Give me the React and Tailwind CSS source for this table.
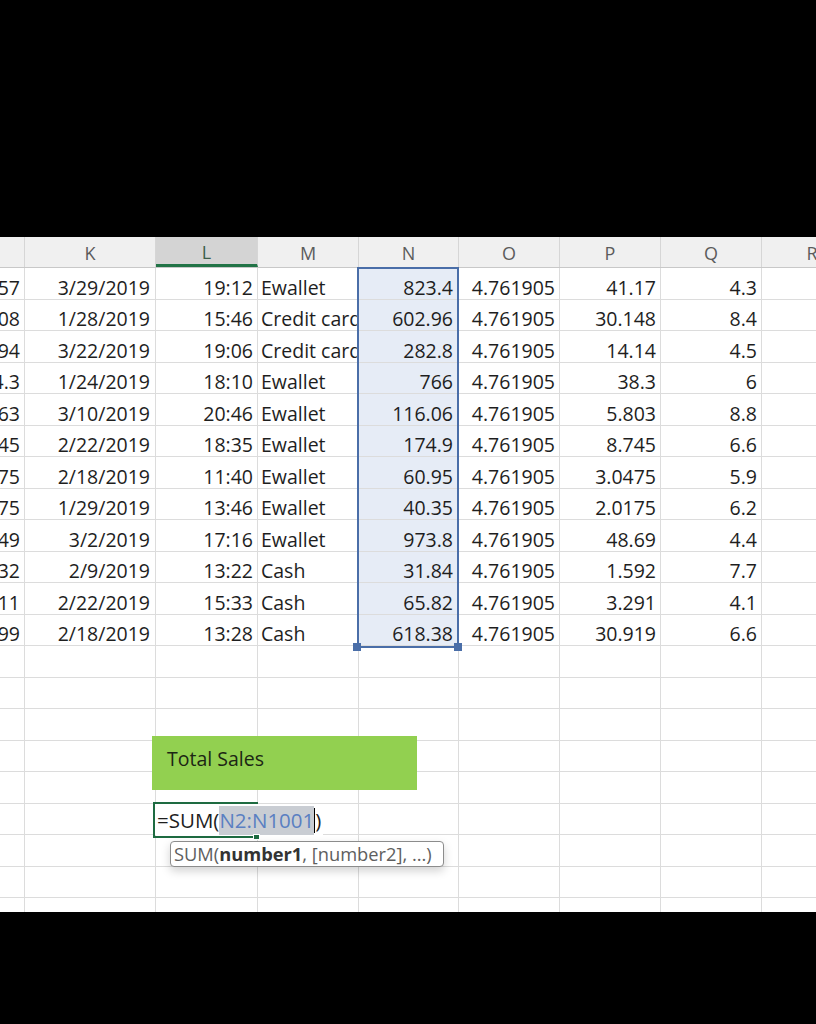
import React from 'react';

const cols = [
  { key: 'J', w: 'w-[25px]', align: 'right', pad: 'pr-[4px]' },
  { key: 'K', w: 'w-[131px]', align: 'right', pad: 'pr-[5px]' },
  { key: 'L', w: 'w-[102px]', align: 'right', pad: 'pr-[4px]' },
  { key: 'M', w: 'w-[101px]', align: 'left', pad: 'pl-[3px]' },
  { key: 'N', w: 'w-[100px]', align: 'right', pad: 'pr-[5px]' },
  { key: 'O', w: 'w-[101px]', align: 'right', pad: 'pr-[4px]' },
  { key: 'P', w: 'w-[101px]', align: 'right', pad: 'pr-[4px]' },
  { key: 'Q', w: 'w-[101px]', align: 'right', pad: 'pr-[4px]' },
  { key: 'R', w: 'w-[101px]', align: 'right', pad: 'pr-[4px]' },
];

const rows = [
  ['864.57', '3/29/2019', '19:12', 'Ewallet', '823.4', '4.761905', '41.17', '4.3'],
  ['633.108', '1/28/2019', '15:46', 'Credit card', '602.96', '4.761905', '30.148', '8.4'],
  ['296.94', '3/22/2019', '19:06', 'Credit card', '282.8', '4.761905', '14.14', '4.5'],
  ['804.3', '1/24/2019', '18:10', 'Ewallet', '766', '4.761905', '38.3', '6'],
  ['121.863', '3/10/2019', '20:46', 'Ewallet', '116.06', '4.761905', '5.803', '8.8'],
  ['183.645', '2/22/2019', '18:35', 'Ewallet', '174.9', '4.761905', '8.745', '6.6'],
  ['63.9975', '2/18/2019', '11:40', 'Ewallet', '60.95', '4.761905', '3.0475', '5.9'],
  ['42.3675', '1/29/2019', '13:46', 'Ewallet', '40.35', '4.761905', '2.0175', '6.2'],
  ['1022.49', '3/2/2019', '17:16', 'Ewallet', '973.8', '4.761905', '48.69', '4.4'],
  ['33.432', '2/9/2019', '13:22', 'Cash', '31.84', '4.761905', '1.592', '7.7'],
  ['69.111', '2/22/2019', '15:33', 'Cash', '65.82', '4.761905', '3.291', '4.1'],
  ['649.299', '2/18/2019', '13:28', 'Cash', '618.38', '4.761905', '30.919', '6.6'],
];

const TOTAL_ROWS = 21;

const HeaderRow = () => (
  <div className="flex h-[31px] bg-[#f0f0f0] border-b border-[#c8c8c8]">
    {cols.map((c) => (
      <div
        key={c.key}
        className={`${c.w} shrink-0 flex items-center justify-center pt-[3px] border-r border-[#d6d6d6] text-[18px] font-normal ${
          c.key === 'L'
            ? 'bg-[#d4d4d4] text-[#3d5f4b] border-b-[3px] border-b-[#217346]'
            : 'text-[#5c5c5c]'
        }`}
      >
        {c.key === 'J' ? '' : c.key}
      </div>
    ))}
  </div>
);

const Row = ({ data, index }) => (
  <div className={`flex ${index % 2 === 0 ? 'h-[32px]' : 'h-[31px]'}`}>
    {cols.map((c, ci) => {
      const value = data ? data[ci] : '';
      const inSel = data && c.key === 'N';
      return (
        <div
          key={c.key}
          className={`${c.w} shrink-0 flex items-end overflow-hidden whitespace-nowrap leading-[22px] border-r border-b border-[#dcdcdc] ${c.pad} ${
            c.align === 'right' ? 'justify-end' : 'justify-start'
          } ${inSel ? 'bg-[#e6ecf6]' : 'bg-white'}`}
        >
          {value}
        </div>
      );
    })}
  </div>
);

export default function App() {
  return (
    <div className="w-[816px] h-[1024px] bg-black overflow-hidden font-['Open_Sans',sans-serif] font-medium text-[19.5px] leading-normal text-[#1e1e1e]">
      <div className="h-[237px]" />
      <div className="relative h-[675px] bg-white overflow-hidden">
        <HeaderRow />
        {Array.from({ length: TOTAL_ROWS }).map((_, i) => (
          <Row key={i} index={i} data={rows[i]} />
        ))}

        {/* selected range N2:N13 */}
        <div className="absolute left-[357px] top-[30px] w-[102px] h-[381px] border-2 border-[#4a6ea8]" />
        <div className="absolute left-[353px] top-[406px] w-[8px] h-[8px] bg-[#4a6ea8]" />
        <div className="absolute left-[454px] top-[406px] w-[8px] h-[8px] bg-[#4a6ea8]" />

        {/* Total Sales shape */}
        <div className="absolute left-[152px] top-[499px] w-[265px] h-[54px] bg-[#92d050] pl-[15px] pt-[8px] text-[#1c2614]">
          Total Sales
        </div>

        {/* active cell in edit mode */}
        <div className="absolute left-[153px] top-[565px] w-[105px] h-[36px] border-2 border-[#1e6b41]" />
        <div className="absolute left-[155px] top-[567px] h-[31px] flex items-end bg-white pl-[2px] pr-[2px] whitespace-nowrap text-[20.5px] leading-[29px]">
          <span>=SUM(</span>
          <span className="bg-[#c9cdd3] text-[#5a7fc2]">N2:N1001</span>
          <span className="w-[1px] h-[25px] bg-black mb-[2px]" />
          <span>)</span>
        </div>
        <div className="absolute left-[253px] top-[597px] w-[7px] h-[6px] bg-[#1e6b41] border border-white" />

        {/* function tooltip */}
        <div className="absolute left-[170px] top-[604px] w-[274px] h-[26px] flex items-center bg-white border border-[#8c8c8c] rounded-[4px] px-[3px] text-[18.3px] font-normal text-[#5e5e5e] whitespace-nowrap shadow-[0_4px_10px_rgba(0,0,0,0.18)]">
          SUM(<b className="font-bold text-[#333]">number1</b>, [number2], ...)
        </div>
      </div>
    </div>
  );
}
